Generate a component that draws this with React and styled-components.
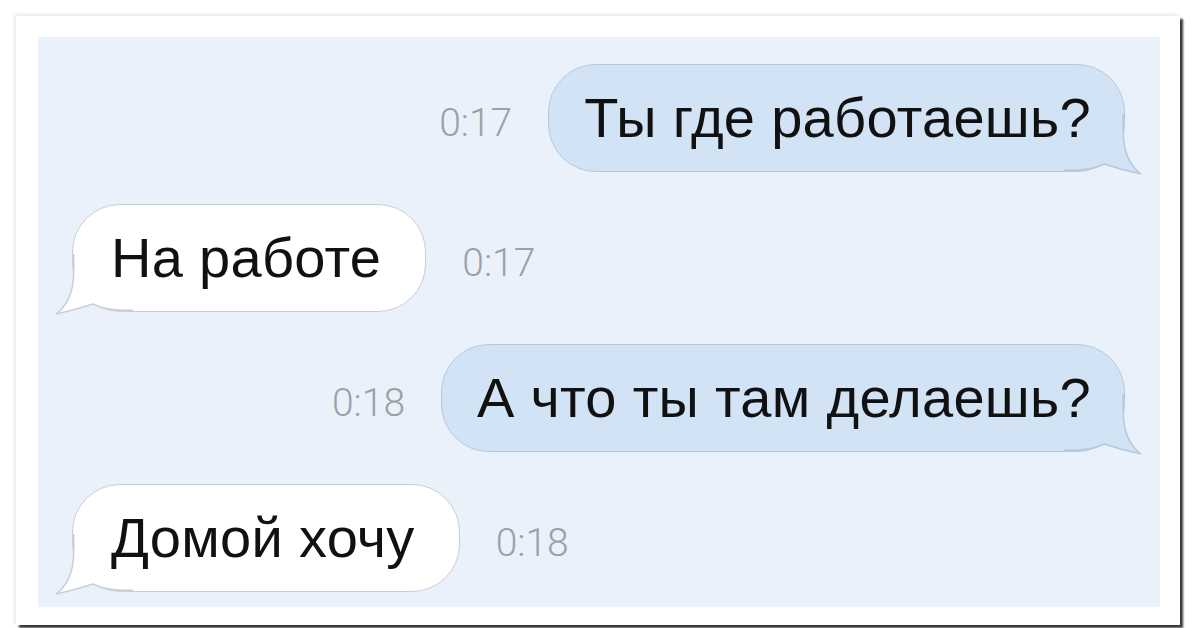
import styled, { createGlobalStyle } from 'styled-components';

const GlobalStyle = createGlobalStyle`
  html, body {
    margin: 0;
    padding: 0;
    background: #ffffff;
  }
  body {
    font-family: "Liberation Sans", Arial, sans-serif;
  }
`;

const Page = styled.div`
  width: 1200px;
  height: 628px;
  padding: 16px 0 0 16px;
  box-sizing: border-box;
  overflow: hidden;
`;

const Frame = styled.div`
  width: 1164px;
  height: 609px;
  box-sizing: border-box;
  padding: 21px 20px 18px 22px;
  background: #ffffff;
  box-shadow: 3px 3px 2px rgba(20, 20, 20, 0.85), -1px -1px 4px rgba(0, 0, 0, 0.12);
`;

const Chat = styled.div`
  height: 100%;
  box-sizing: border-box;
  background: #ebf1fa;
  padding: 27px 35px 0 34px;
  display: flex;
  flex-direction: column;
  gap: 32px;
`;

const Row = styled.div`
  display: flex;
  align-items: center;
  justify-content: ${p => (p.$sent ? 'flex-end' : 'flex-start')};
  gap: 36px;
`;

const Bubble = styled.div`
  position: relative;
  height: 108px;
  box-sizing: border-box;
  display: flex;
  align-items: center;
  padding: ${p => (p.$sent ? '0 33px 0 35px' : '0 44px 0 38px')};
  border-radius: 48px;
  background: ${p => (p.$sent ? '#d3e3f6' : '#ffffff')};
  border: 1.5px solid ${p => (p.$sent ? '#b8c8dc' : '#c9ced5')};
`;

const Text = styled.span`
  position: relative;
  z-index: 1;
  font-size: 56px;
  letter-spacing: 0.3px;
  line-height: 1;
  color: #111111;
  white-space: nowrap;
`;

const Time = styled.span`
  font-family: Roboto, "Liberation Sans", sans-serif;
  font-weight: 300;
  font-size: 39px;
  color: #9aa1a9;
  padding-top: 10px;
`;

const TailSvg = styled.svg`
  position: absolute;
  bottom: -5px;
  ${p => (p.$sent ? 'right: -20px; transform: scaleX(-1);' : 'left: -20px;')}
  overflow: visible;
`;

const TAIL_EDGE =
  'M20.75 8 L20.75 25 C20.75 45 14 60 3 68 Q22 64 40 58 C48 62 56 64.25 72 64.25 L80 64.25';

function Tail({ sent }) {
  return (
    <TailSvg $sent={sent} width="80" height="70" viewBox="0 0 80 70">
      <path d={TAIL_EDGE + ' L80 8 Z'} fill={sent ? '#d3e3f6' : '#ffffff'} />
      <path d={TAIL_EDGE} fill="none" stroke={sent ? '#b8c8dc' : '#c9ced5'} strokeWidth="1.5" />
    </TailSvg>
  );
}

const messages = [
  { id: 1, sent: true, text: 'Ты где работаешь?', time: '0:17' },
  { id: 2, sent: false, text: 'На работе', time: '0:17' },
  { id: 3, sent: true, text: 'А что ты там делаешь?', time: '0:18' },
  { id: 4, sent: false, text: 'Домой хочу', time: '0:18' },
];

export default function App() {
  return (
    <>
      <GlobalStyle />
      <Page>
        <Frame>
          <Chat>
            {messages.map(m => (
              <Row key={m.id} $sent={m.sent}>
                {m.sent && <Time>{m.time}</Time>}
                <Bubble $sent={m.sent}>
                  <Tail sent={m.sent} />
                  <Text>{m.text}</Text>
                </Bubble>
                {!m.sent && <Time>{m.time}</Time>}
              </Row>
            ))}
          </Chat>
        </Frame>
      </Page>
    </>
  );
}
